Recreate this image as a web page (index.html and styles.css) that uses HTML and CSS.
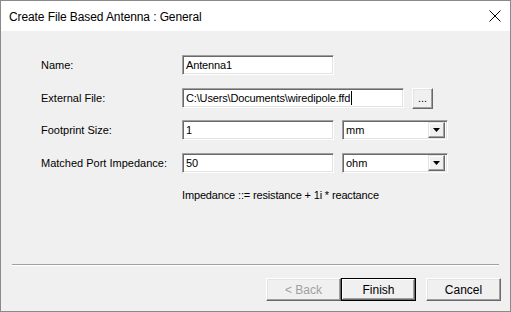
FILE: index.html
```html
<!DOCTYPE html>
<html>
<head>
<meta charset="utf-8">
<link rel="stylesheet" href="styles.css">
</head>
<body>
<div class="window">
  <div class="titlebar">
    <span class="title">Create File Based Antenna : General</span>
    <svg class="close" width="12" height="12" viewBox="0 0 12 12"><path d="M0.5 0.5 L11.5 11.5 M11.5 0.5 L0.5 11.5" stroke="#000" stroke-width="1" fill="none"/></svg>
  </div>
  <div class="content">
    <div class="form">
      <div class="row">
        <label class="lbl">Name:</label>
        <div class="field w152">Antenna1</div>
      </div>
      <div class="row">
        <label class="lbl">External File:</label>
        <div class="field w222">C:\Users\Documents\wiredipole.ffd<span class="caret"></span></div>
        <div class="btn small">...</div>
      </div>
      <div class="row r3">
        <label class="lbl">Footprint Size:</label>
        <div class="field w152">1</div>
        <div class="combo"><span>mm</span><span class="arrow"><svg width="7" height="4" viewBox="0 0 7 4"><path d="M0 0 H7 L3.5 4 Z" fill="#000"/></svg></span></div>
      </div>
      <div class="row">
        <label class="lbl">Matched Port Impedance:</label>
        <div class="field w152">50</div>
        <div class="combo"><span>ohm</span><span class="arrow"><svg width="7" height="4" viewBox="0 0 7 4"><path d="M0 0 H7 L3.5 4 Z" fill="#000"/></svg></span></div>
      </div>
      <div class="note">Impedance ::= resistance + 1i * reactance</div>
    </div>
    <div class="sep"></div>
    <div class="buttons">
      <div class="btn disabled">&lt; Back</div>
      <div class="btn default">Finish</div>
      <div class="btn cancel">Cancel</div>
    </div>
  </div>
</div>
</body>
</html>
```
FILE: styles.css
```css
* { box-sizing: border-box; }
html, body { margin: 0; padding: 0; }
body {
  width: 511px;
  height: 312px;
  overflow: hidden;
  background: #f0f0f0;
}
.window {
  width: 511px;
  height: 312px;
  border: 1px solid #8a8a8a;
  display: flex;
  flex-direction: column;
  font-family: "Liberation Sans", Arial, sans-serif;
  font-size: 11px;
  color: #000;
}
.titlebar {
  height: 30px;
  background: #fff;
  display: flex;
  align-items: center;
  padding-left: 8px;
  padding-right: 9px;
}
.title {
  font-family: "Liberation Sans", Arial, sans-serif;
  font-size: 12px;
  letter-spacing: -0.1px;
  flex: 1;
  margin-top: 1px;
}
.content {
  flex: 1;
  background: #f0f0f0;
  display: flex;
  flex-direction: column;
}
.form {
  flex: 1;
  padding: 24px 0 0 40px;
}
.row {
  display: flex;
  align-items: center;
  height: 20px;
}
.row + .row { margin-top: 13px; }
.row.r3 { margin-top: 12px; }
.lbl {
  width: 141px;
}
.field {
  height: 20px;
  background: #fff;
  border: 1px solid;
  border-color: #a0a0a0 #fff #fff #a0a0a0;
  box-shadow: inset 1px 1px #696969, inset -1px -1px #e3e3e3;
  padding: 0 2px 0 3px;
  display: flex;
  align-items: center;
  white-space: nowrap;
  font-size: 11px;
  letter-spacing: -0.15px;
}
.w152 { width: 152px; }
.w222 { width: 222px; }
.caret {
  display: inline-block;
  width: 1px;
  height: 14px;
  background: #000;
  margin-left: 1px;
}
.btn {
  display: flex;
  align-items: center;
  justify-content: center;
  background: #f0f0f0;
  border: 1px solid;
  border-color: #fff #696969 #696969 #fff;
  box-shadow: inset -1px -1px #a0a0a0, inset 1px 1px #e3e3e3;
  font-size: 12px;
}
.btn.small {
  width: 21px;
  height: 21px;
  margin-left: 8px;
  margin-top: 1px;
  font-size: 11px;
  padding-bottom: 2px;
}
.combo {
  margin-left: 8px;
  width: 106px;
  height: 20px;
  background: #fff;
  border: 1px solid;
  border-color: #a0a0a0 #fff #fff #a0a0a0;
  box-shadow: inset 1px 1px #696969, inset -1px -1px #e3e3e3;
  display: flex;
  align-items: center;
  padding: 2px 2px 2px 3px;
  font-size: 11px;
}
.combo span:first-child { flex: 1; }
.arrow {
  width: 17px;
  height: 16px;
  background: #f0f0f0;
  border: 1px solid;
  border-color: #e3e3e3 #696969 #696969 #e3e3e3;
  box-shadow: inset -1px -1px #a0a0a0, inset 1px 1px #fff;
  display: flex;
  align-items: center;
  justify-content: center;
}
.note {
  margin-top: 16px;
  margin-left: 141px;
  font-size: 11px;
  letter-spacing: -0.15px;
}
.sep {
  margin: 0 11px 0 11px;
  height: 2px;
  border-top: 1px solid #a0a0a0;
  border-bottom: 1px solid #fff;
}
.buttons {
  display: flex;
  justify-content: flex-end;
  padding: 12px 9px 10px 0;
}
.buttons .btn {
  width: 75px;
  height: 23px;
}
.btn.disabled { color: #a0a0a0; }
.btn.default {
  border: 1px solid #000;
  box-shadow: inset -1px -1px #696969, inset 1px 1px #fff, inset -2px -2px #a0a0a0;
}
.btn.cancel { margin-left: 10px; }
```
